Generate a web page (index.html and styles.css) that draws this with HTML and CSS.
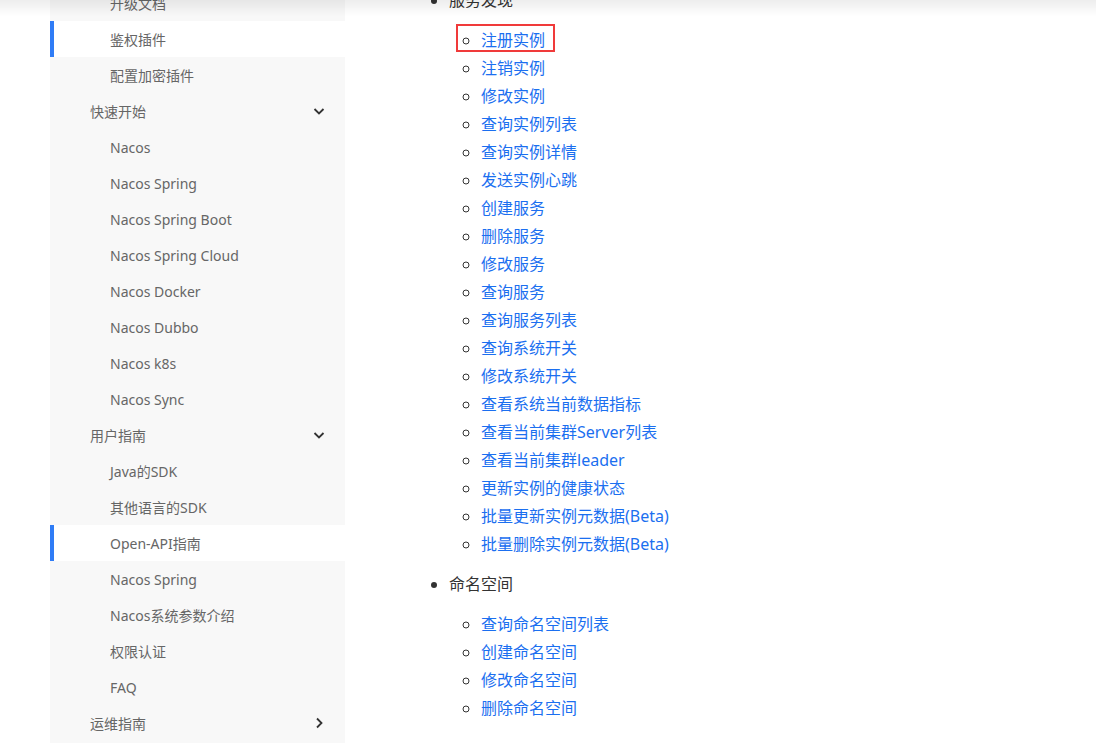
FILE: index.html
```html
<!DOCTYPE html>
<html lang="zh-CN">
<head>
    <meta charset="UTF-8">
    <meta name="viewport" content="width=device-width, initial-scale=1.0">
    <title>Open-API指南</title>
    <link rel="stylesheet" href="styles.css">
</head>
<body>
<div class="layout">
    <div class="sidebar">
        <div class="menu-item sub">升级文档</div>
        <div class="menu-item sub active">鉴权插件</div>
        <div class="menu-item sub">配置加密插件</div>
        <div class="menu-item group">快速开始
            <svg class="arrow" width="12" height="12" viewBox="0 0 12 12"><path d="M1.5 4 L6 8.5 L10.5 4" fill="none" stroke="#333" stroke-width="1.8"/></svg>
        </div>
        <div class="menu-item sub">Nacos</div>
        <div class="menu-item sub">Nacos Spring</div>
        <div class="menu-item sub">Nacos Spring Boot</div>
        <div class="menu-item sub">Nacos Spring Cloud</div>
        <div class="menu-item sub">Nacos Docker</div>
        <div class="menu-item sub">Nacos Dubbo</div>
        <div class="menu-item sub">Nacos k8s</div>
        <div class="menu-item sub">Nacos Sync</div>
        <div class="menu-item group">用户指南
            <svg class="arrow" width="12" height="12" viewBox="0 0 12 12"><path d="M1.5 4 L6 8.5 L10.5 4" fill="none" stroke="#333" stroke-width="1.8"/></svg>
        </div>
        <div class="menu-item sub">Java的SDK</div>
        <div class="menu-item sub">其他语言的SDK</div>
        <div class="menu-item sub active">Open-API指南</div>
        <div class="menu-item sub">Nacos Spring</div>
        <div class="menu-item sub">Nacos系统参数介绍</div>
        <div class="menu-item sub">权限认证</div>
        <div class="menu-item sub">FAQ</div>
        <div class="menu-item group">运维指南
            <svg class="arrow" width="12" height="12" viewBox="0 0 12 12"><path d="M4 1.5 L8.5 6 L4 10.5" fill="none" stroke="#333" stroke-width="1.8"/></svg>
        </div>
    </div>

    <div class="content">
        <ul class="toc">
            <li>服务发现
                <ul>
                    <li><a href="#" class="marked">注册实例</a></li>
                    <li><a href="#">注销实例</a></li>
                    <li><a href="#">修改实例</a></li>
                    <li><a href="#">查询实例列表</a></li>
                    <li><a href="#">查询实例详情</a></li>
                    <li><a href="#">发送实例心跳</a></li>
                    <li><a href="#">创建服务</a></li>
                    <li><a href="#">删除服务</a></li>
                    <li><a href="#">修改服务</a></li>
                    <li><a href="#">查询服务</a></li>
                    <li><a href="#">查询服务列表</a></li>
                    <li><a href="#">查询系统开关</a></li>
                    <li><a href="#">修改系统开关</a></li>
                    <li><a href="#">查看系统当前数据指标</a></li>
                    <li><a href="#">查看当前集群Server列表</a></li>
                    <li><a href="#">查看当前集群leader</a></li>
                    <li><a href="#">更新实例的健康状态</a></li>
                    <li><a href="#">批量更新实例元数据(Beta)</a></li>
                    <li><a href="#">批量删除实例元数据(Beta)</a></li>
                </ul>
            </li>
            <li>命名空间
                <ul>
                    <li><a href="#">查询命名空间列表</a></li>
                    <li><a href="#">创建命名空间</a></li>
                    <li><a href="#">修改命名空间</a></li>
                    <li><a href="#">删除命名空间</a></li>
                </ul>
            </li>
        </ul>
    </div>
</div>
</body>
</html>
```

FILE: styles.css
```css
body {
    margin: 0;
    font-family: "Noto Sans", "Noto Sans CJK SC", sans-serif;
    background-color: #fff;
    overflow: hidden;
}
body::before {
    content: "";
    position: fixed;
    top: 0;
    left: 0;
    right: 0;
    height: 16px;
    background: linear-gradient(rgba(0, 0, 0, 0.07), rgba(0, 0, 0, 0));
    z-index: 10;
}
.layout {
    display: flex;
    align-items: flex-start;
    margin-top: -14px;
    padding-left: 50px;
}
.sidebar {
    width: 295px;
    flex-shrink: 0;
    margin-top: -1px;
    padding-bottom: 20px;
    background-color: #f8f8f8;
}
.menu-item {
    display: flex;
    align-items: center;
    justify-content: space-between;
    height: 36px;
    font-size: 14px;
    color: #666;
    box-sizing: border-box;
    border-left: 4px solid transparent;
    padding-right: 20px;
}
.menu-item.group {
    padding-left: 36px;
}
.menu-item.sub {
    padding-left: 56px;
}
.menu-item.active {
    background-color: #fff;
    border-left-color: #2f7cf6;
}
.arrow {
    flex-shrink: 0;
}
.content {
    flex: 1;
    padding-left: 64px;
}
.toc {
    margin: 0;
    padding-left: 40px;
    font-size: 16px;
    line-height: 28px;
    color: #333;
}
.toc ul {
    margin: 12px 0;
    padding-left: 32px;
}
.toc a {
    color: #1b6ff0;
    text-decoration: none;
}
.marked {
    display: inline-block;
    position: relative;
    vertical-align: top;
}
.marked::after {
    content: "";
    position: absolute;
    left: -25px;
    right: -10px;
    top: -2px;
    bottom: 2px;
    border: 2px solid #f03a3a;
}
```
